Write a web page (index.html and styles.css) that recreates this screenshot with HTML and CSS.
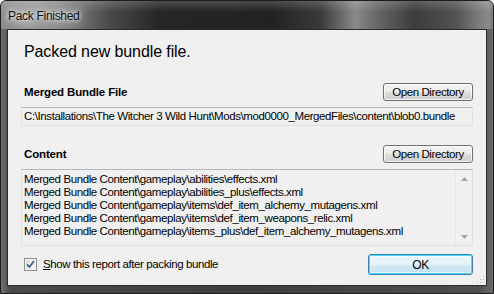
FILE: index.html
```html
<!DOCTYPE html>
<html>
<head>
<meta charset="utf-8">
<title>Pack Finished</title>
<link rel="stylesheet" href="styles.css">
</head>
<body>
<div class="window">
  <div class="titlebar"><span class="title">Pack Finished</span></div>
  <div class="frame">
    <div class="client">
      <div class="heading">Packed new bundle file.</div>

      <div class="row row-first">
        <span class="label">Merged Bundle File</span>
        <button class="btn btn-dir">Open Directory</button>
      </div>
      <div class="textbox">C:\Installations\The Witcher 3 Wild Hunt\Mods\mod0000_MergedFiles\content\blob0.bundle</div>

      <div class="row row-second">
        <span class="label">Content</span>
        <button class="btn btn-dir">Open Directory</button>
      </div>
      <div class="listbox">
        <div class="items">
          <div>Merged Bundle Content\gameplay\abilities\effects.xml</div>
          <div>Merged Bundle Content\gameplay\abilities_plus\effects.xml</div>
          <div>Merged Bundle Content\gameplay\items\def_item_alchemy_mutagens.xml</div>
          <div>Merged Bundle Content\gameplay\items\def_item_weapons_relic.xml</div>
          <div>Merged Bundle Content\gameplay\items_plus\def_item_alchemy_mutagens.xml</div>
        </div>
        <div class="scrollbar">
          <svg class="arrow" width="7" height="4" viewBox="0 0 7 4"><path d="M0 4 L3.5 0 L7 4 Z" fill="#a3a3a3"/></svg>
          <svg class="arrow" width="7" height="4" viewBox="0 0 7 4"><path d="M0 0 L7 0 L3.5 4 Z" fill="#a3a3a3"/></svg>
        </div>
      </div>

      <div class="row row-bottom">
        <label class="check">
          <span class="box">
            <svg width="9" height="9" viewBox="0 0 9 9"><path d="M1 4.5 L3.5 7 L8 1" fill="none" stroke="#4a5f97" stroke-width="1.8"/></svg>
          </span>
          <span class="check-text"><u>S</u>how this report after packing bundle</span>
        </label>
        <button class="btn btn-ok">OK</button>
      </div>

      <svg class="grip" width="9" height="9" viewBox="0 0 9 9">
        <g fill="#b8b8b8">
          <rect x="7" y="1" width="1" height="1"/>
          <rect x="4" y="4" width="1" height="1"/><rect x="7" y="4" width="1" height="1"/>
          <rect x="1" y="7" width="1" height="1"/><rect x="4" y="7" width="1" height="1"/><rect x="7" y="7" width="1" height="1"/>
        </g>
      </svg>
    </div>
  </div>
</div>
</body>
</html>
```

FILE: styles.css
```css
html, body {
  margin: 0;
  padding: 0;
  background: #ffffff;
}
body {
  font-family: "Liberation Sans", Arial, sans-serif;
  font-size: 11.5px;
  letter-spacing: -0.4px;
  color: #000;
}
.window {
  width: 494px;
  height: 294px;
  box-sizing: border-box;
  display: flex;
  flex-direction: column;
  border-radius: 6px 6px 0 0;
  border: 1px solid #1c1c1c;
  background: linear-gradient(to right, #707070 0%, #4a4a4a 2%, #3e3e3e 50%, #4e4e4e 97%, #6a6a6a 100%);
  overflow: hidden;
}
.titlebar {
  height: 28px;
  flex: none;
  display: flex;
  align-items: center;
  padding-left: 7px;
  background:
    linear-gradient(to bottom, rgba(255,255,255,0.18), rgba(255,255,255,0) 40%),
    linear-gradient(to right, #8c8c8c 0%, #9a9a9a 6%, #8a8a8a 12%, #4a4a4a 22%, #262626 32%, #222222 55%, #3a3a3a 65%, #8a8a8a 72%, #6a6a6a 76%, #3c3c3c 84%, #505050 92%, #8a8a8a 99%, #7a7a7a 100%);
}
.title {
  font-size: 12px;
  letter-spacing: -0.3px;
  color: #111;
  text-shadow: 0 0 4px #fff, 0 0 8px rgba(255,255,255,0.9), 0 0 14px rgba(255,255,255,0.7);
  margin-top: 2px;
}
.frame {
  flex: 1;
  min-height: 0;
  display: flex;
  padding: 0 6px 7px 6px;
}
.client {
  flex: 1;
  min-width: 0;
  overflow: hidden;
  position: relative;
  background: #f0f0f0;
  border: 1px solid #2a2a2a;
  padding: 12px 13px 0 13px;
  display: flex;
  flex-direction: column;
}
.heading {
  font-size: 16px;
  line-height: 19px;
  letter-spacing: -0.1px;
  padding-left: 3px;
}
.row {
  display: flex;
  justify-content: space-between;
  align-items: flex-end;
}
.row-first {
  margin-top: 22px;
}
.row-second {
  margin-top: 19px;
}
.label {
  font-weight: bold;
  font-size: 11.5px;
  line-height: 15px;
  letter-spacing: -0.15px;
  padding-left: 3px;
  margin-bottom: 1px;
}
.btn {
  font-family: inherit;
  font-size: 11.5px;
  letter-spacing: -0.4px;
  color: #000;
  padding: 0;
  border: 1px solid #707070;
  border-radius: 3px;
  background: linear-gradient(to bottom, #f2f2f2 0%, #ebebeb 50%, #dddddd 51%, #cfcfcf 100%);
  box-shadow: inset 0 0 0 1px rgba(255,255,255,0.75);
}
.btn-dir {
  width: 90px;
  height: 18px;
  line-height: 15px;
  flex: none;
}
.textbox {
  margin-top: 6px;
  height: 19px;
  min-width: 0;
  box-sizing: border-box;
  border: 1px solid #dcdfe4;
  border-top-color: #b5b8bd;
  background: #f0f0f0;
  padding: 0 0 0 2px;
  line-height: 17px;
  white-space: nowrap;
  overflow: hidden;
}
.listbox {
  margin-top: 6px;
  height: 77px;
  min-width: 0;
  box-sizing: border-box;
  border: 1px solid #dcdfe4;
  border-top-color: #b5b8bd;
  background: #f0f0f0;
  display: flex;
}
.items {
  flex: 1;
  min-width: 0;
  padding: 3px 0 0 2px;
  line-height: 13px;
  white-space: nowrap;
  overflow: hidden;
}
.scrollbar {
  width: 16px;
  flex: none;
  border-left: 1px solid #e6e6e6;
  display: flex;
  flex-direction: column;
  justify-content: space-between;
  align-items: center;
  padding: 7px 0 6px 0;
}
.arrow {
  display: block;
}
.row-bottom {
  margin-top: 8px;
  align-items: center;
}
.check {
  display: flex;
  align-items: center;
  padding-left: 3px;
}
.box {
  width: 13px;
  height: 13px;
  box-sizing: border-box;
  border: 1px solid #8e8f8f;
  background: linear-gradient(135deg, #dcdcdc, #fbfbfb);
  display: flex;
  align-items: center;
  justify-content: center;
  box-shadow: inset 0 0 0 1px #f4f4f4;
}
.box svg {
  display: block;
}
.check-text {
  margin-left: 6px;
  line-height: 15px;
}
.check-text u {
  text-decoration: underline;
}
.btn-ok {
  width: 105px;
  height: 21px;
  flex: none;
  font-size: 12px;
  border-color: #3c7fb1;
  background: linear-gradient(to bottom, #eaf6fd 0%, #e4f1f9 50%, #d3e9f6 51%, #c4e1f3 100%);
  box-shadow: inset 0 0 0 1px #48d8fb, inset 0 0 0 2px rgba(255,255,255,0.5);
}
.grip {
  position: absolute;
  right: 1px;
  bottom: 1px;
}
```
